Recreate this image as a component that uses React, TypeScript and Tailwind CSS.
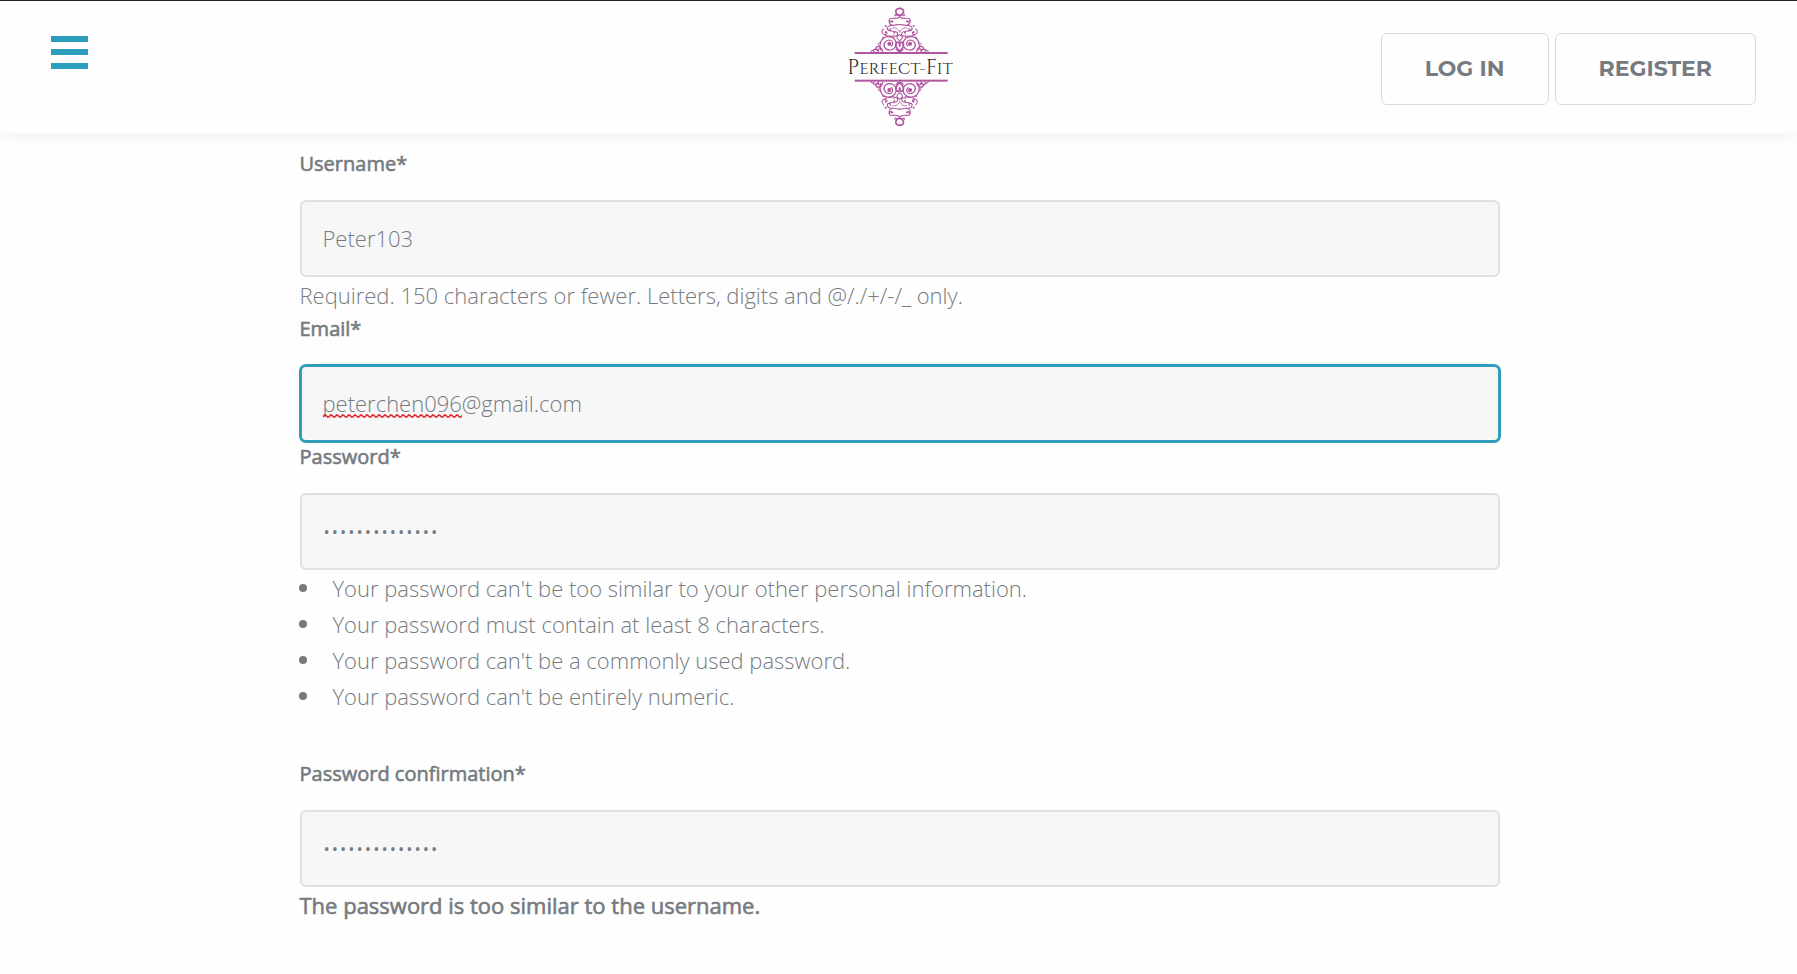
import type { ReactNode } from 'react';

const inputBase =
  'block h-[77px] w-full rounded-md bg-[#f7f7f7] px-[21px] pb-[2px] text-[22px] font-light text-[#757b80] outline-none border-2';

const strongText = '[-webkit-text-stroke:0.6px_#757b80]';

function OrnamentHalf() {
  return (
    <g fill="none" stroke="#b0559f" strokeWidth="3.2" strokeLinecap="round">
      <path d="M209 25C199 25 196 32 198 38C200 43 205 46 209 46" strokeWidth="5" />
      <path d="M200 45C196 49 194 46 195 43" />
      <path d="M209 50L203 54" />
      <path d="M204 54C192 58 184 51 179 57C174 64 182 69 186 64" />
      <path d="M179 58C175 66 178 74 188 76C197 77 203 72 209 74" />
      <path d="M186 76C174 76 168 85 174 90C179 93 184 88 180 85" />
      <path d="M175 90C184 97 196 90 202 98C206 106 196 112 191 106" />
      <path d="M188 84C196 82 204 86 209 96" strokeWidth="2.5" />
      <path d="M161 87C153 91 155 103 164 104C172 104 173 95 167 95" />
      <path d="M164 104C170 112 182 105 192 112" />
      <path d="M152 150C146 132 154 111 173 110C190 109 201 122 198 136C194 150 174 155 165 144C157 133 166 120 179 120C189 121 191 133 184 138" strokeWidth="3.6" />
      <path d="M209 104C199 107 197 116 209 122" />
      <path d="M209 153C196 145 195 131 202 127C208 125 209 132 209 137" strokeWidth="5" />
      <path d="M198 148C201 153 205 155 209 155" />
      <path d="M158 154C156 140 142 135 138 144C137 151 146 153 147 147" strokeWidth="4" />
      <path d="M145 155C142 145 131 146 130 152" strokeWidth="4" />
      <path d="M133 155C130 150 124 151 123 156" />
      <path d="M149 128C144 128 143 133 146 136" strokeWidth="2.5" />
      <circle cx="178" cy="131" r="4.5" fill="#b0559f" />
      <g fill="#b0559f" stroke="none">
        <circle cx="160" cy="113" r="3" />
        <circle cx="167" cy="78" r="3" />
        <circle cx="193" cy="98" r="3" />
        <circle cx="186" cy="64" r="3.5" />
        <circle cx="167" cy="97" r="3" />
      </g>
    </g>
  );
}

function Ornament() {
  return (
    <g>
      <OrnamentHalf />
      <g transform="translate(418 0) scale(-1 1)">
        <OrnamentHalf />
      </g>
      <rect x="74" y="156" width="279" height="6" fill="#b0559f" />
    </g>
  );
}

function Logo() {
  return (
    <svg viewBox="45 12 330 378" className="h-[126px] w-[110px]" role="img" aria-label="Perfect-Fit">
      <Ornament />
      <g transform="translate(0 401) scale(1 -1)">
        <Ornament />
      </g>
      <text x="210" y="221" textAnchor="middle" fontSize="62" fill="#2b2b30" fontFamily="'Cinzel', 'Liberation Serif', serif">
        P<tspan fontSize="50">ERFECT-</tspan>F<tspan fontSize="50">IT</tspan>
      </text>
    </svg>
  );
}

function Label({ htmlFor, children }: { htmlFor: string; children: ReactNode }) {
  return (
    <label htmlFor={htmlFor} className={`mb-[21px] block text-[20px] leading-[30px] ${strongText}`}>
      {children}
    </label>
  );
}

function NavLink({ href, children }: { href: string; children: ReactNode }) {
  return (
    <a
      href={href}
      className="flex h-[72px] items-center rounded-md border border-[#d9dcdc] px-[43px] pb-[2px] font-['Montserrat','Inter',sans-serif] text-[22px] font-bold text-[#757b80]"
    >
      {children}
    </a>
  );
}

const rules = [
  "Your password can't be too similar to your other personal information.",
  'Your password must contain at least 8 characters.',
  "Your password can't be a commonly used password.",
  "Your password can't be entirely numeric.",
];

export default function App() {
  return (
    <div className="min-h-screen bg-[#fefefe] font-['Open_Sans',sans-serif] text-[#757b80]">
      <header className="grid h-[133px] grid-cols-[1fr_auto_1fr] items-start border-t border-[#222025] bg-[#fefefe] pr-[41px] pl-[43px] shadow-[0_2px_16px_rgba(0,0,0,0.06)]">
        <button type="button" aria-label="Menu" className="mt-[35px] ml-2 w-[37px]">
          <svg viewBox="0 0 37 33" className="block h-[33px] w-[37px]" fill="#2b9ebd">
            <rect width="37" height="6" />
            <rect y="13" width="37" height="6" />
            <rect y="27" width="37" height="6" />
          </svg>
        </button>
        <a href="#home" className="mt-[3px] block">
          <Logo />
        </a>
        <nav className="mt-8 flex justify-end gap-1.5">
          <NavLink href="#login">LOG IN</NavLink>
          <NavLink href="#register">REGISTER</NavLink>
        </nav>
      </header>

      <main className="pt-4 pb-12 pl-[2px]">
        <form className="mx-auto max-w-[1200px]">
          <Label htmlFor="username">Username*</Label>
          <input id="username" type="text" defaultValue="Peter103" className={`${inputBase} border-[#dfe1e1]`} />
          <p className="mb-px text-[22px] leading-9 font-light">
            Required. 150 characters or fewer. Letters, digits and @/./+/-/_ only.
          </p>

          <Label htmlFor="email">Email*</Label>
          <div className="relative">
            <input
              id="email"
              type="email"
              defaultValue="peterchen096@gmail.com"
              className={`${inputBase} border-[#319dba] ring-1 ring-[#319dba]`}
            />
            <svg className="absolute top-[49px] left-[23px] h-1 w-[139px]" aria-hidden="true">
              <defs>
                <pattern id="wave" width="6" height="4" patternUnits="userSpaceOnUse">
                  <path d="M-1 3.5L0 3L1.5 1L3 1.5L4.5 3L6 3L7 1.5" fill="none" stroke="#e0242b" strokeWidth="1.5" />
                </pattern>
              </defs>
              <rect width="139" height="4" fill="url(#wave)" />
            </svg>
          </div>

          <Label htmlFor="password">Password*</Label>
          <input id="password" type="password" defaultValue="Perfectfit-103" className={`${inputBase} border-[#dfe1e1]`} />
          <ul className="mb-[45px] text-[22px] leading-9 font-light">
            {rules.map((rule) => (
              <li key={rule} className="flex items-center gap-[26px]">
                <span className="-ml-px size-2 shrink-0 rounded-full bg-[#757b80]" />
                {rule}
              </li>
            ))}
          </ul>

          <Label htmlFor="confirmation">Password confirmation*</Label>
          <input id="confirmation" type="password" defaultValue="Perfectfit-103" className={`${inputBase} border-[#dfe1e1]`} />
          <p className={`text-[22px] leading-9 ${strongText}`}>The password is too similar to the username.</p>
        </form>
      </main>
    </div>
  );
}
